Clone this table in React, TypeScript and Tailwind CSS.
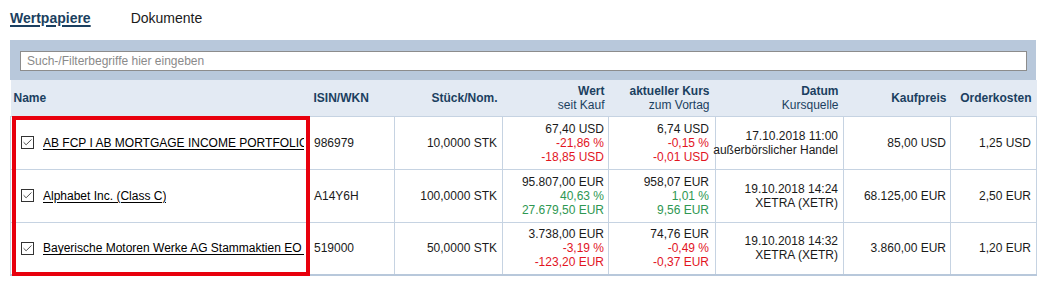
import { CheckIcon } from "lucide-react";

type Row = {
  name: string;
  isin: string;
  qty: string;
  wert: string;
  wertPct: string;
  wertAbs: string;
  kurs: string;
  kursPct: string;
  kursAbs: string;
  up: boolean;
  datum: string;
  quelle: string;
  kaufpreis: string;
  kosten: string;
};

const rows: Row[] = [
  {
    name: "AB FCP I AB MORTGAGE INCOME PORTFOLIO",
    isin: "986979",
    qty: "10,0000 STK",
    wert: "67,40 USD",
    wertPct: "-21,86 %",
    wertAbs: "-18,85 USD",
    kurs: "6,74 USD",
    kursPct: "-0,15 %",
    kursAbs: "-0,01 USD",
    up: false,
    datum: "17.10.2018 11:00",
    quelle: "außerbörslicher Handel",
    kaufpreis: "85,00 USD",
    kosten: "1,25 USD",
  },
  {
    name: "Alphabet Inc. (Class C)",
    isin: "A14Y6H",
    qty: "100,0000 STK",
    wert: "95.807,00 EUR",
    wertPct: "40,63 %",
    wertAbs: "27.679,50 EUR",
    kurs: "958,07 EUR",
    kursPct: "1,01 %",
    kursAbs: "9,56 EUR",
    up: true,
    datum: "19.10.2018 14:24",
    quelle: "XETRA (XETR)",
    kaufpreis: "68.125,00 EUR",
    kosten: "2,50 EUR",
  },
  {
    name: "Bayerische Motoren Werke AG Stammaktien EO 1",
    isin: "519000",
    qty: "50,0000 STK",
    wert: "3.738,00 EUR",
    wertPct: "-3,19 %",
    wertAbs: "-123,20 EUR",
    kurs: "74,76 EUR",
    kursPct: "-0,49 %",
    kursAbs: "-0,37 EUR",
    up: false,
    datum: "19.10.2018 14:32",
    quelle: "XETRA (XETR)",
    kaufpreis: "3.860,00 EUR",
    kosten: "1,20 EUR",
  },
];

const td = "border border-[#c6d3e2] px-[5px] align-middle";

export default function App() {
  return (
    <div className="h-[282px] w-[1040px] bg-white font-['Liberation_Sans',Arial,sans-serif] text-[12px] leading-[14px] text-[#1a1a1a]">
      <div className="flex h-[40px] items-start gap-[40px] px-[10px] pt-[10px]">
        <span className="text-[14px] leading-[16px] font-bold text-[#1b3f60] underline decoration-2 underline-offset-[2px]">
          Wertpapiere
        </span>
        <span className="text-[14px] leading-[16px] text-[#1a1a1a]">Dokumente</span>
      </div>

      <div className="relative mx-[10px] w-[1026px]">
        <div className="bg-[#b8c8db] pt-[11px] pr-[9px] pb-[9px] pl-[10px]">
          <input
            type="text"
            placeholder="Such-/Filterbegriffe hier eingeben"
            className="block h-[20px] w-full border border-[#8c8c8c] bg-white px-[6px] text-[12px] text-black outline-none placeholder:text-[#8a8a8a]"
          />
        </div>

        <table className="w-full table-fixed border-collapse">
          <colgroup>
            <col className="w-[299px]" />
            <col className="w-[85px]" />
            <col className="w-[108px]" />
            <col className="w-[106px]" />
            <col className="w-[107px]" />
            <col className="w-[128px]" />
            <col className="w-[107px]" />
            <col className="w-[86px]" />
          </colgroup>
          <thead>
            <tr className="h-[36px] bg-[#e3eaf3] text-[#1b3f60]">
              <th className="pl-[3px] text-left font-bold">Name</th>
              <th className="pl-[4px] text-left font-bold">ISIN/WKN</th>
              <th className="pr-[5px] text-right font-bold">Stück/Nom.</th>
              <th className="pr-[4px] text-right font-normal">
                <div className="font-bold">Wert</div>
                <div>seit Kauf</div>
              </th>
              <th className="pr-[6px] text-right font-normal">
                <div className="font-bold">aktueller Kurs</div>
                <div>zum Vortag</div>
              </th>
              <th className="pr-[5px] text-right font-normal">
                <div className="font-bold">Datum</div>
                <div>Kursquelle</div>
              </th>
              <th className="pr-[4px] text-right font-bold">Kaufpreis</th>
              <th className="pr-[5px] text-right font-bold">Orderkosten</th>
            </tr>
          </thead>
          <tbody>
            {rows.map((r, i) => {
              const tone = r.up ? "text-[#2e9752]" : "text-[#e2151f]";
              const last = i === rows.length - 1;
              return (
                <tr
                  key={r.isin}
                  className={
                    last
                      ? "h-[53px] border-b-2 border-b-[#b8c8db]"
                      : "h-[53px]"
                  }
                >
                  <td className={td + " pl-[10px]"}>
                    <div className="flex items-center gap-[9px]">
                      <span className="flex size-[13px] shrink-0 items-center justify-center border border-[#333] bg-white">
                        <CheckIcon className="size-[11px] text-[#222]" strokeWidth={1.75} />
                      </span>
                      <span className="overflow-hidden whitespace-nowrap text-black underline underline-offset-2">
                        {r.name}
                      </span>
                    </div>
                  </td>
                  <td className={td + " pl-[4px] text-left"}>{r.isin}</td>
                  <td className={td + " text-right"}>{r.qty}</td>
                  <td className={td + " pr-[4px] text-right"}>
                    <div>{r.wert}</div>
                    <div className={tone}>{r.wertPct}</div>
                    <div className={tone}>{r.wertAbs}</div>
                  </td>
                  <td className={td + " pr-[6px] text-right"}>
                    <div>{r.kurs}</div>
                    <div className={tone}>{r.kursPct}</div>
                    <div className={tone}>{r.kursAbs}</div>
                  </td>
                  <td className={td}>
                    <div className="flex flex-col items-end whitespace-nowrap">
                      <span>{r.datum}</span>
                      <span>{r.quelle}</span>
                    </div>
                  </td>
                  <td className={td + " pr-[4px] text-right"}>{r.kaufpreis}</td>
                  <td className={td + " text-right"}>{r.kosten}</td>
                </tr>
              );
            })}
          </tbody>
        </table>

        <div className="pointer-events-none absolute top-[76px] left-[2px] h-[160px] w-[298px] border-4 border-[#e8000d]" />
      </div>
    </div>
  );
}
